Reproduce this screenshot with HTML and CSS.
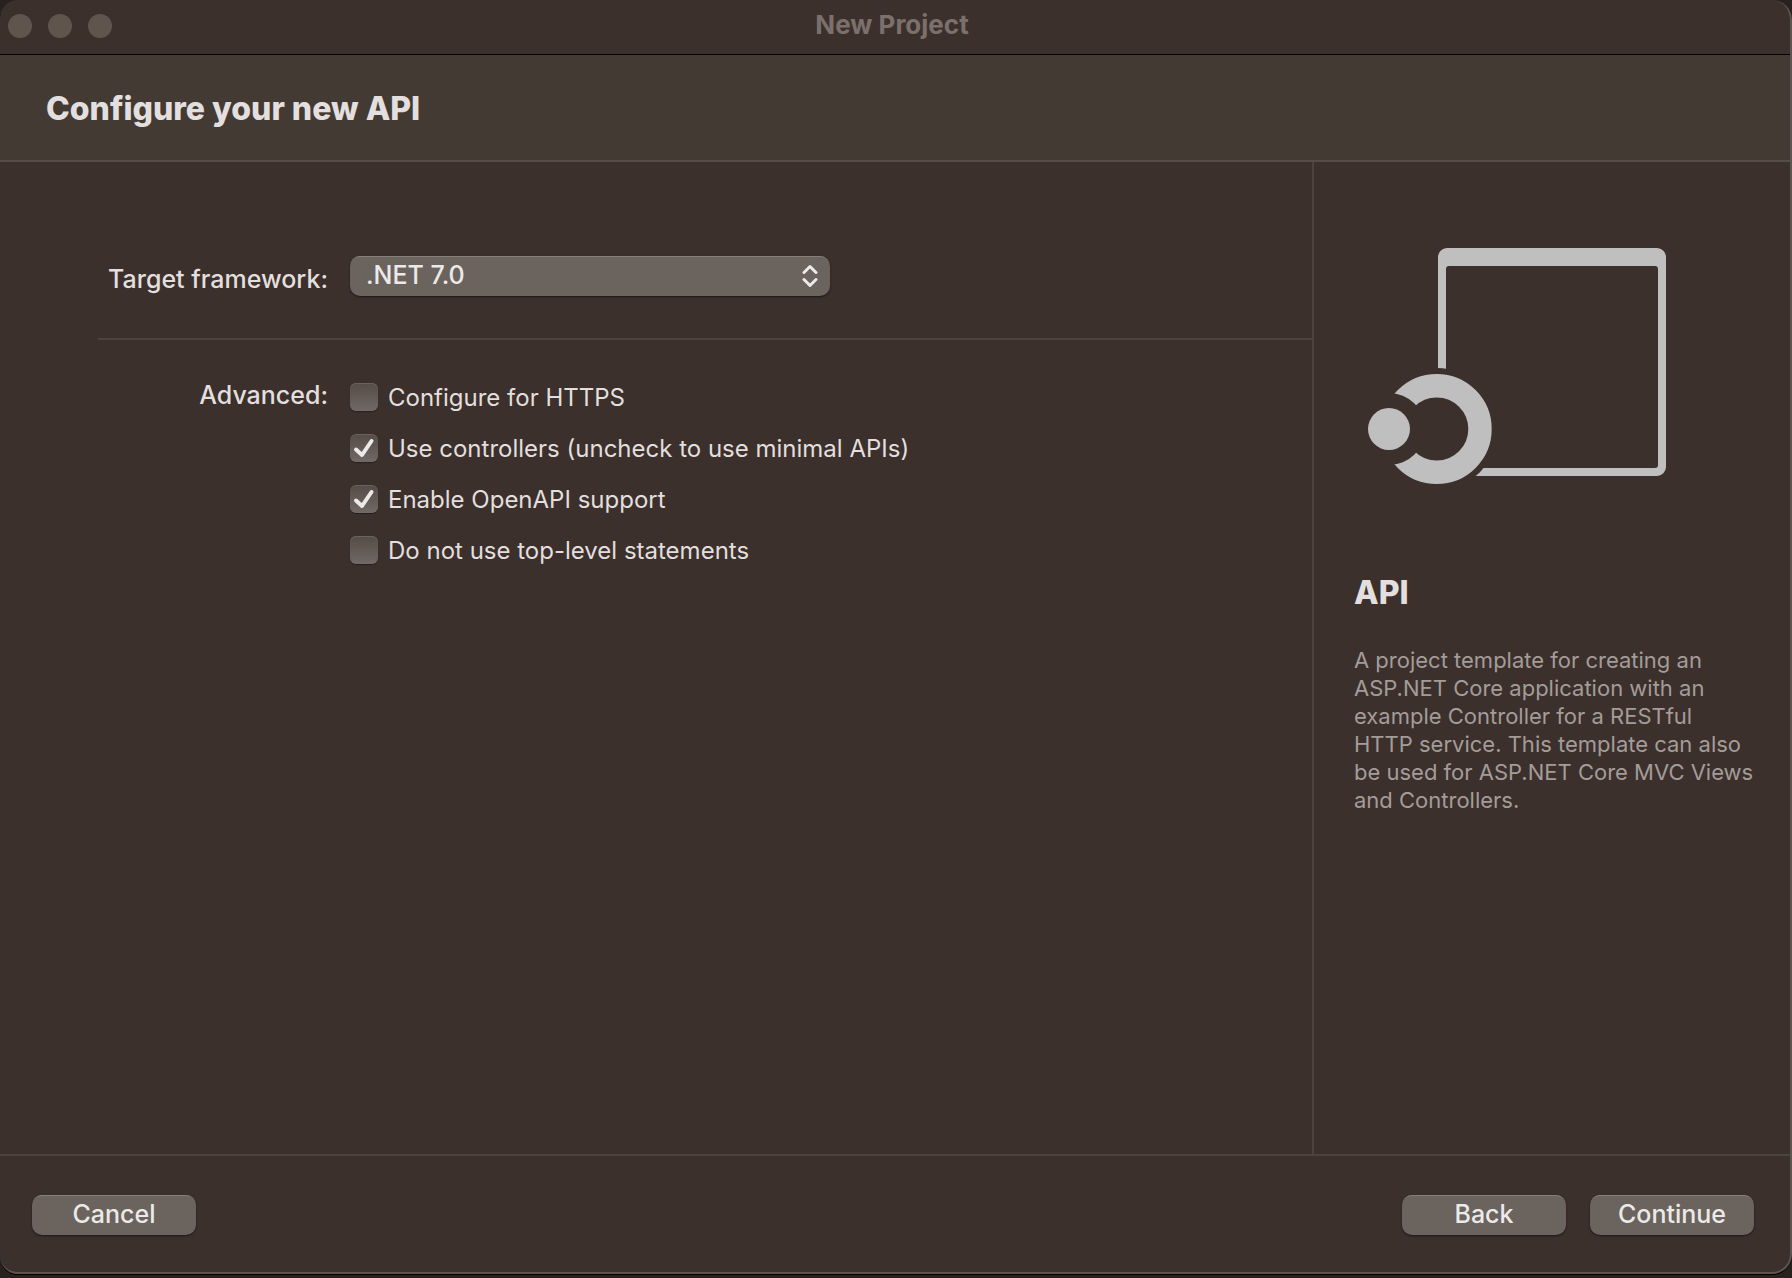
FILE: index.html
```html
<!DOCTYPE html>
<html lang="en">
<head>
<meta charset="utf-8">
<title>New Project</title>
<link rel="stylesheet" href="styles.css">
</head>
<body>
<div class="window">
  <header class="titlebar">
    <div class="lights">
      <button class="light" type="button" aria-label="Close"></button>
      <button class="light" type="button" aria-label="Minimize"></button>
      <button class="light" type="button" aria-label="Zoom"></button>
    </div>
    <div class="window-title">New Project</div>
  </header>
  <div class="banner"><h1 class="heading">Configure your new API</h1></div>
  <form class="dialog">
    <div class="content">
      <main class="settings">
        <div class="row framework">
          <label class="row-label" for="framework">Target framework:</label>
          <div class="popup">
            <select class="popup-select" id="framework"><option>.NET 7.0</option></select>
            <svg class="popup-arrows" width="16" height="24" viewBox="0 0 16 24" aria-hidden="true"><path d="M2 8.500 8 2.500l6 6M2 15.500l6 6 6-6"/></svg>
          </div>
        </div>
        <div class="row advanced" role="group" aria-labelledby="advanced">
          <div class="row-label" id="advanced">Advanced:</div>
          <div class="options">
            <label class="option"><input class="check" type="checkbox"><span class="option-text">Configure for HTTPS</span></label>
            <label class="option"><input class="check" type="checkbox" checked><span class="option-text">Use controllers (uncheck to use minimal APIs)</span></label>
            <label class="option"><input class="check" type="checkbox" checked><span class="option-text">Enable OpenAPI support</span></label>
            <label class="option"><input class="check" type="checkbox"><span class="option-text">Do not use top-level statements</span></label>
          </div>
        </div>
      </main>
      <aside class="details">
        <svg class="template-icon" width="298" height="236" viewBox="28 28 298 236" aria-hidden="true">
          <defs>
            <mask id="frame-cut" maskUnits="userSpaceOnUse" x="28" y="28" width="298" height="236">
              <rect x="28" y="28" width="298" height="236" fill="#fff"/>
              <circle cx="96.700" cy="209" r="61"/>
              <rect x="90" y="209" width="40" height="55"/>
            </mask>
            <mask id="ring-cut" maskUnits="userSpaceOnUse" x="28" y="28" width="298" height="236">
              <rect x="28" y="28" width="298" height="236" fill="#fff"/>
              <circle cx="49" cy="209" r="36"/>
              <path d="M28 174h27v70H28z"/>
            </mask>
          </defs>
          <path class="shape" mask="url(#frame-cut)" fill-rule="evenodd" d="M107 28h210a9 9 0 0 1 9 9v210a9 9 0 0 1-9 9H107a9 9 0 0 1-9-9V37a9 9 0 0 1 9-9zM109 46a3 3 0 0 0-3 3v196a3 3 0 0 0 3 3h206a3 3 0 0 0 3-3V49a3 3 0 0 0-3-3z"/>
          <circle class="ring" mask="url(#ring-cut)" cx="96.700" cy="209" r="43.300"/>
          <circle class="shape" cx="49" cy="209" r="21"/>
        </svg>
        <h2 class="template-name">API</h2>
        <p class="template-text">A project template for creating an ASP.NET Core application with an example Controller for a RESTful HTTP service. This template can also be used for ASP.NET Core MVC Views and Controllers.</p>
      </aside>
    </div>
    <footer class="actions">
      <button class="button" type="button">Cancel</button>
      <div class="steps">
        <button class="button" type="button">Back</button>
        <button class="button" type="submit">Continue</button>
      </div>
    </footer>
  </form>
</div>
</body>
</html>
```

FILE: styles.css
```css
* { box-sizing: border-box; }

body {
  margin: 0;
  height: 100vh;
  padding-bottom: 4px;
  background: #28211d;
  color: #e2dfde;
  font: 500 25px/32px Inter, "Liberation Sans", sans-serif;
}

.window {
  height: 100%;
  display: flex;
  flex-direction: column;
  overflow: hidden;
  background: #3b302c;
  border: solid #5e5551;
  border-width: 0 2px 2px 0;
  border-radius: 18px 20px 20px 18px;
  box-shadow: 0 1px 0 #000;
}

.titlebar {
  display: grid;
  grid-template-columns: 104px 1fr 118px;
  align-items: center;
  height: 55px;
  padding: 0 0 4px 8px;
  border-bottom: 1px solid #000;
}

.lights {
  display: flex;
  gap: 16px;
  padding-top: 2px;
}

.light {
  width: 24px;
  height: 24px;
  padding: 0;
  border: 0;
  border-radius: 50%;
  background: #5f554d;
}

.window-title {
  text-align: center;
  font-size: 26px;
  font-weight: 700;
  color: #7b706c;
}

.banner {
  display: flex;
  align-items: center;
  height: 107px;
  padding: 2px 46px 0;
  background: #443a34;
  border-bottom: 2px solid #564d49;
}

.heading, .template-name {
  margin: 0;
  font-size: 32px;
  line-height: 40px;
  font-weight: 800;
}

.dialog {
  flex: 1;
  display: flex;
  flex-direction: column;
}

.content { flex: 1; display: flex; }

.settings {
  flex: 1;
  padding: 94px 0 0 98px;
}

.row { display: flex; gap: 22px; }

.row-label {
  width: 230px;
  text-align: right;
  white-space: nowrap;
}

.framework {
  padding-bottom: 42px;
  border-bottom: 2px solid #4c423e;
}

.framework .row-label { padding-top: 7px; }

.advanced { padding-top: 39px; }

.popup {
  position: relative;
  width: 480px;
  height: 40px;
}

.popup-select, .button {
  height: 40px;
  border: 0;
  border-radius: 10px;
  background: #6b635e;
  box-shadow: inset 0 2px 0 -1px #86807b, 0 1px 2px #1d1714;
  color: #eceae9;
  font: inherit;
}

.popup-select {
  appearance: none;
  width: 100%;
  padding: 0 48px 2px 16px;
}

.popup-arrows {
  position: absolute;
  top: 8px;
  right: 12px;
  fill: none;
  stroke: #eceae9;
  stroke-width: 3;
  stroke-linecap: round;
  stroke-linejoin: round;
  pointer-events: none;
}

.options {
  display: flex;
  flex-direction: column;
  gap: 17px;
  padding-top: 1px;
  font-size: 24px;
  font-weight: 400;
}

.option {
  display: flex;
  align-items: center;
  gap: 10px;
}

.option-text { padding-top: 2px; }

.check {
  appearance: none;
  width: 28px;
  height: 28px;
  margin: 0;
  border-radius: 6px;
  background: linear-gradient(#554b47, #716965);
  box-shadow: inset 0 1px 0 #6b625e, 0 1px 1px #2a211e;
}

.check:checked {
  background: url("data:image/svg+xml,%3Csvg xmlns='http://www.w3.org/2000/svg' viewBox='0 0 28 28'%3E%3Cpath d='M6 15.500l6 5.500L21.500 7' fill='none' stroke='%23eceae9' stroke-width='4' stroke-linecap='round' stroke-linejoin='round'/%3E%3C/svg%3E"), linear-gradient(#554b47, #716965);
}

.details {
  width: 478px;
  padding: 86px 36px 0 40px;
  border-left: 2px solid #4c423e;
}

.template-icon { display: block; margin-left: 14px; }

.shape { fill: #bfbfbf; }

.ring {
  fill: none;
  stroke: #bfbfbf;
  stroke-width: 23.400px;
}

.template-name { margin-top: 89px; }

.template-text {
  margin: 33px 0 0;
  font-size: 22px;
  line-height: 28px;
  font-weight: 400;
  color: #a49c99;
}

.actions {
  display: flex;
  justify-content: space-between;
  height: 118px;
  padding: 39px 36px 0 32px;
  border-top: 2px solid #4c423e;
}

.steps { display: flex; gap: 24px; }

.button {
  width: 164px;
  padding: 0 0 2px;
}
```
